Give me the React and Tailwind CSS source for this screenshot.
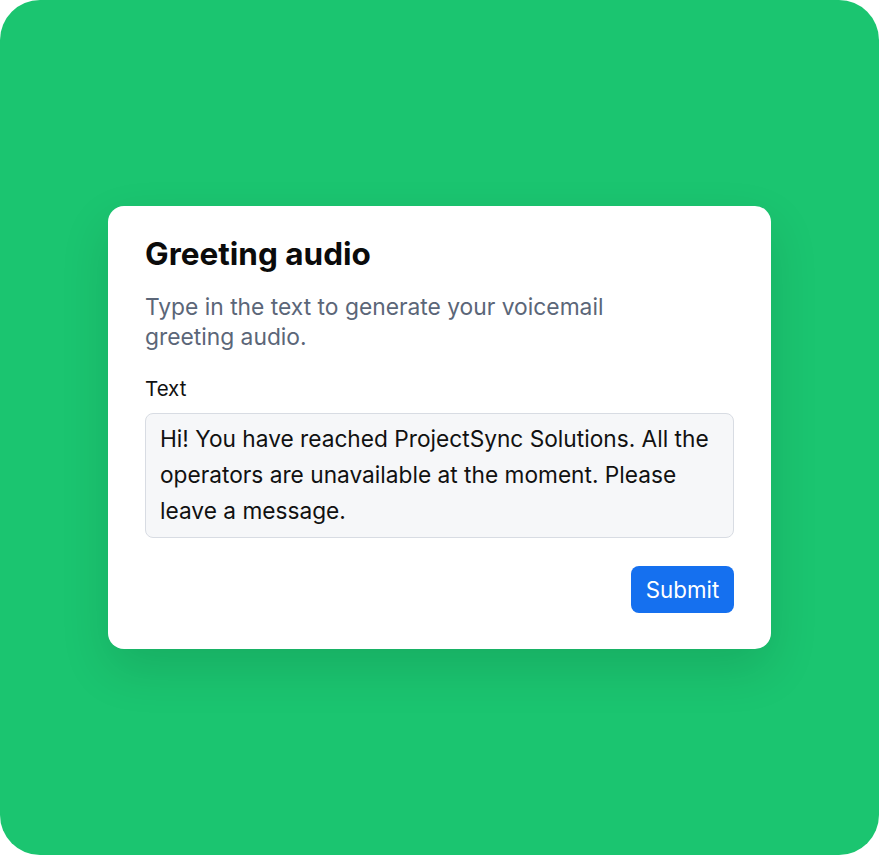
export default function App() {
  return (
    <div className="w-[879px] h-[855px] bg-[#1bc570] rounded-[40px] flex items-center justify-center font-['Inter','Liberation_Sans',sans-serif]">
      <div className="w-[663px] bg-white rounded-[16px] px-[37px] pt-[28px] pb-[36px] shadow-[0_20px_50px_rgba(0,0,0,0.12)] flex flex-col">
        <h1 className="text-[31.5px] leading-[40px] font-bold text-[#0b0b0b]">Greeting audio</h1>
        <p className="mt-[18px] text-[22.8px] leading-[30px] text-[#5b6678] max-w-[500px]">
          Type in the text to generate your voicemail greeting audio.
        </p>
        <label className="mt-[23px] text-[20.5px] leading-[28px] text-[#111]">Text</label>
        <div className="mt-[10px] w-full h-[125px] bg-[#f6f7f9] border border-[#d8dce3] rounded-[8px] pl-[14px] pr-[8px] pt-[6.5px] text-[22.7px] leading-[36px] text-[#111]">
          Hi! You have reached ProjectSync Solutions. All the operators are unavailable at the moment. Please leave a message.
        </div>
        <div className="flex justify-end mt-[28px]">
          <button className="w-[103px] h-[47px] bg-[#1570ef] rounded-[8px] text-white text-[22.3px]">Submit</button>
        </div>
      </div>
    </div>
  );
}
